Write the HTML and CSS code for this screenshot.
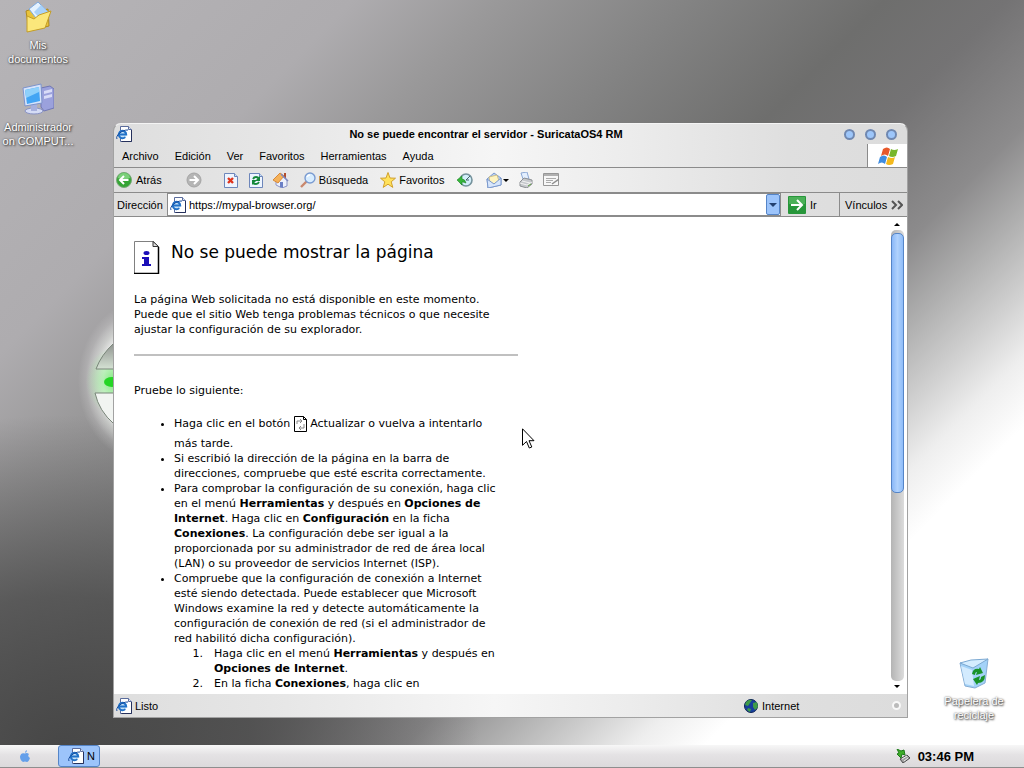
FILE: index.html
```html
<!DOCTYPE html>
<html lang="es">

<head>
  <meta charset="UTF-8" />
  <meta name="viewport" content="width=device-width, initial-scale=1.0" />
  <title>No se puede encontrar el servidor - SuricataOS4 RM</title>
  <link rel="stylesheet" href="styles.css">
</head>

<body>
  <!-- shared icons -->
  <svg class="defs" aria-hidden="true">
    <symbol id="ie-page" viewBox="0 0 16 16">
      <path d="M4.500 .5h8l3 3v12h-11z" fill="#fff" stroke="#5b6c9c" />
      <path d="M15.500 4v11.500h-10" fill="none" stroke="#26315c" />
      <path d="M12.500 .5v3h3" fill="#dbe6f7" stroke="#5b6c9c" />
      <circle cx="6.500" cy="8.500" r="4" fill="#c5e2f8" />
      <path d="M3 8.500h7.200a3.700 3.700 0 1 0-1 2.600" fill="none" stroke="#2272c8" stroke-width="2" />
      <path d="M1 13C-1 10 6 3.500 12 4" fill="none" stroke="#174b9b" stroke-width="1" />
    </symbol>
    <symbol id="page" viewBox="0 0 14 16">
      <path d="M.5 1.500h10l3 3v11H.5z" fill="#eef5ff" stroke="#6d86ba" />
      <path d="M10.500 1.500v3h3" fill="#c8dcf6" stroke="#6d86ba" />
    </symbol>
  </svg>

  <main class="desktop">
    <svg class="orb" viewBox="0 0 80 160" aria-hidden="true">
      <defs>
        <radialGradient id="glow">
          <stop offset="0.600" stop-color="#fff" stop-opacity=".9" />
          <stop offset="0.750" stop-color="#f2f6f1" stop-opacity=".5" />
          <stop offset="0.880" stop-color="#fff" stop-opacity=".15" />
          <stop offset="1" stop-color="#fff" stop-opacity="0" />
        </radialGradient>
        <radialGradient id="greenGlow">
          <stop offset="0" stop-color="#6fe56c" stop-opacity=".9" />
          <stop offset="1" stop-color="#9df09b" stop-opacity="0" />
        </radialGradient>
        <linearGradient id="orbTop" x1="0" y1="0" x2="0" y2="1">
          <stop offset="0" stop-color="#8e928e" />
          <stop offset="1" stop-color="#d5e2d4" />
        </linearGradient>
      </defs>
      <ellipse cx="68" cy="80" rx="64" ry="80" fill="url(#glow)" />
      <ellipse cx="40" cy="80" rx="28" ry="34" fill="url(#greenGlow)" />
      <path d="M22 68Q27 54 40 42H80V68Z" fill="url(#orbTop)" stroke="#798579" />
      <path d="M21 92Q25 110 40 123H80V92Z" fill="#f1f4f1" stroke="#798579" />
      <ellipse cx="38" cy="81" rx="8" ry="5" fill="#25d525" />
    </svg>

    <a class="shortcut documents" href="#">
      <svg viewBox="0 0 32 32" aria-hidden="true">
        <path d="M4 10l6-2 3 3 13-3 1 17-20 5z" fill="#e9c33a" stroke="#b08a1c" />
        <path d="M7 8l9-7 10 10-9 10z" fill="#e4f2ff" stroke="#7fabe0" />
        <path d="M12 11l7-7 7 7-7 8z" fill="#a9d2f9" />
        <path d="M5 31V15l7 3 5-4 12-4-6 17z" fill="#fbe77b" stroke="#c49e28" />
      </svg>
      <span>Mis documentos</span>
    </a>
    <a class="shortcut computer" href="#">
      <svg viewBox="0 0 32 32" aria-hidden="true">
        <path d="M19 5l9-2 4 3v19l-10 3-3-4z" fill="#9ba1dc" stroke="#7077b5" />
        <path d="M22 8l8-2v3l-8 2zM22 13l8-2v3l-8 2z" fill="#d9dcf7" />
        <ellipse cx="12" cy="28" rx="9" ry="3" fill="#d5dcf5" stroke="#8993c6" />
        <path d="M9 21h6v7H9z" fill="#a7b0dd" />
        <path d="M1 5l18-4 1 19-17 3z" fill="#d7e4fb" stroke="#7d93cb" />
        <path d="M3 7l14-3 1 14-13 3z" fill="#43a5f4" />
        <path d="M3 7l14-3v5L4 15z" fill="#8ed0fb" />
      </svg>
      <span>Administrador on COMPUT...</span>
    </a>
    <a class="shortcut trash" href="#">
      <svg viewBox="0 0 32 32" aria-hidden="true">
        <path d="M2 6l12 3 16-7-3 24-10 5-10-2z" fill="#a3d2f8" stroke="#86add4" />
        <path d="M2 6l11-3 17-1-15 9z" fill="#d5edff" stroke="#7ca9d2" />
        <path d="M3 9l11 4 2 16-9-2z" fill="#d3ebfe" />
        <path d="M14 17q1-6 7-5l1-2 3 6-7 2 1-3q-2 0-2 3zM27 18q0 8-7 8l-1 2-4-6 7-3-1 4q2 0 2-3z" fill="#199328" />
      </svg>
      <span>Papelera de reciclaje</span>
    </a>

    <section class="window">
      <header class="title-bar">
        <svg class="icon" aria-hidden="true"><use href="#ie-page" /></svg>
        <h1>No se puede encontrar el servidor - SuricataOS4 RM</h1>
        <div class="window-buttons">
          <button type="button" aria-label="Minimizar"></button>
          <button type="button" aria-label="Maximizar"></button>
          <button type="button" aria-label="Cerrar"></button>
        </div>
      </header>

      <nav class="menu-bar">
        <button type="button">Archivo</button>
        <button type="button">Edición</button>
        <button type="button">Ver</button>
        <button type="button">Favoritos</button>
        <button type="button">Herramientas</button>
        <button type="button">Ayuda</button>
        <div class="flag">
          <svg viewBox="0 0 20 18" aria-hidden="true">
            <path d="M5 2q4-3 7 0l-2 7q-3-3-7 0z" fill="#e8592b" />
            <path d="M13 2q3 2 7 0l-2 7q-4 2-7 0z" fill="#78b72a" />
            <path d="M2 10q4-3 7 0l-2 7q-3-3-7 0z" fill="#3f8ce0" />
            <path d="M10 10q4 2 7 0l-2 7q-4 2-7 0z" fill="#f4b91d" />
          </svg>
        </div>
      </nav>

      <div class="tool-bar">
        <button type="button" class="back">
          <svg class="icon" viewBox="0 0 16 16" aria-hidden="true">
            <circle cx="8" cy="8" r="7.500" fill="#35a535" stroke="#77a877" />
            <path d="M2 6a6 5 0 0 1 12 0q-6 3-12 0" fill="#7bd07a" />
            <path d="M12.500 8H4.500M8 4L4 8l4 4" fill="none" stroke="#fff" stroke-width="2" />
          </svg>
          Atrás
        </button>
        <button type="button" class="forward" aria-label="Adelante">
          <svg class="icon" viewBox="0 0 16 16" aria-hidden="true">
            <circle cx="8" cy="8" r="7" fill="#b5b5b5" stroke="#a4a4a4" />
            <path d="M3.500 8h8M8 4l4 4-4 4" fill="none" stroke="#fff" stroke-width="2" />
          </svg>
        </button>
        <button type="button" aria-label="Detener">
          <svg class="icon" viewBox="-1 0 16 16" aria-hidden="true">
            <use href="#page" width="14" height="16" />
            <path d="M4 6l5 5M9 6l-5 5" stroke="#e0341c" stroke-width="2.400" />
          </svg>
        </button>
        <button type="button" aria-label="Actualizar">
          <svg class="icon" viewBox="-1 0 16 16" aria-hidden="true">
            <use href="#page" width="14" height="16" />
            <path d="M4 7q1-2 3-2t3 2M10 10q-1 2-3 2t-3-1" fill="none" stroke="#15883a" stroke-width="1.800" />
            <path d="M11 4v5H6zM3 13V8h5z" fill="#15883a" />
          </svg>
        </button>
        <button type="button" aria-label="Página principal">
          <svg class="icon" viewBox="0 0 16 16" aria-hidden="true">
            <path d="M3 8l5-5 6 5v6l-5 2-6-3z" fill="#edf1fc" stroke="#8a93c5" />
            <path d="M11 1h2v5h-2z" fill="#b34d2c" />
            <path d="M0 8l7-7 4 3-6 7z" fill="#f5b25a" stroke="#d8893a" />
            <path d="M8 2l7 7" stroke="#7c86bd" stroke-width="1.500" />
            <path d="M7 10h3v6l-3-1z" fill="#6b80c5" />
          </svg>
        </button>
        <button type="button" class="search">
          <svg class="icon" viewBox="0 0 16 16" aria-hidden="true">
            <path d="M1 15l6-6" stroke="#c9876d" stroke-width="2.400" />
            <circle cx="10" cy="6" r="5" fill="#d8edff" stroke="#7a9bd1" stroke-width="1.400" />
            <path d="M7 5q1-2 3-2" fill="none" stroke="#fff" stroke-width="1.500" />
          </svg>
          Búsqueda
        </button>
        <button type="button" class="favorites">
          <svg class="icon" viewBox="0 0 16 16" aria-hidden="true">
            <path d="M8 .5l2 5.500 5.500.2-4.300 3.600 1.600 5.600L8 12.200l-4.800 3.200 1.600-5.600L.5 6.200 6 6z" fill="#ffe25c" stroke="#d1a02c" />
          </svg>
          Favoritos
        </button>
        <button type="button" class="history" aria-label="Historial">
          <svg class="icon" viewBox="0 0 16 16" aria-hidden="true">
            <circle cx="9" cy="8" r="6" fill="#d4effa" stroke="#75929c" stroke-width="1.600" />
            <path d="M9 8l4-4M9 8h3" stroke="#45616a" />
            <path d="M0 8l5-4v3q3 0 4 4-2-1-4-1v3z" fill="#36b63a" stroke="#1d8426" stroke-width=".6" />
          </svg>
        </button>
        <button type="button" class="mail" aria-label="Correo">
          <svg class="icon" viewBox="0 0 16 16" aria-hidden="true">
            <path d="M1 7l7-6 7 5v7L2 16z" fill="#b9d0f4" stroke="#7c99cc" />
            <path d="M3 5l8-2 2 6-5 3-4-2z" fill="#fff4c0" stroke="#ccb978" stroke-width=".8" />
            <path d="M1 7l7 5 7-6v7L2 16z" fill="#d7e6fc" stroke="#7c99cc" />
          </svg>
          <span class="caret"></span>
        </button>
        <button type="button" class="print" aria-label="Imprimir">
          <svg class="icon" viewBox="0 0 16 16" aria-hidden="true">
            <path d="M3 1l6-1 2 7H5z" fill="#e3efff" stroke="#8ca8d4" />
            <path d="M2 10l4-4 8 2v4l-5 4-7-2z" fill="#c5c8cc" stroke="#8b8e92" />
            <path d="M2 11l7 2 5-3M4 9l8 2" fill="none" stroke="#f3f3f3" />
            <path d="M10 14l3-2" stroke="#63a63f" />
          </svg>
        </button>
        <button type="button" aria-label="Modificar">
          <svg class="icon" viewBox="0 0 16 16" aria-hidden="true">
            <path d="M.5 1.500h15v12H.5z" fill="#f7f7f7" stroke="#979797" />
            <path d="M1 3h14" stroke="#b0b0b0" stroke-width="2" />
            <path d="M3 6.500h10M3 8.500h7M3 10.500h5" stroke="#ababab" />
            <path d="M9 12l7-5" stroke="#8d8d8d" stroke-width="1.500" />
          </svg>
        </button>
      </div>

      <form class="address-bar">
        <label for="address">Dirección</label>
        <div class="address-field">
          <svg class="icon" aria-hidden="true"><use href="#ie-page" /></svg>
          <input type="text" id="address" value="https://mypal-browser.org/" />
          <button type="button" class="drop" aria-label="Mostrar direcciones"><span class="caret"></span></button>
        </div>
        <button type="submit" class="go">
          <svg viewBox="0 0 18 18" aria-hidden="true">
            <rect width="18" height="18" rx="1" fill="#27963a" />
            <path d="M1 1h16v7H1z" fill="#4bb058" />
            <path d="M3 9h11M9 4l5 5-5 5" fill="none" stroke="#fff" stroke-width="2" />
          </svg>
          Ir
        </button>
        <button type="button" class="links">
          Vínculos
          <svg viewBox="0 0 12 10" aria-hidden="true">
            <path d="M1 1l4 4-4 4M7 1l4 4-4 4" fill="none" stroke="#555" stroke-width="2" />
          </svg>
        </button>
      </form>

      <div class="view">
        <article class="page">
          <div class="page-title">
            <svg viewBox="0 0 26 33" aria-hidden="true">
              <path d="M.5.5h19l5 5v27H.5z" fill="#fff" stroke="#808080" />
              <path d="M24.500 6v26.500H0" fill="none" stroke="#000" stroke-width="1.500" />
              <path d="M19 .5v5h5.500z" fill="#ddd" stroke="#333" />
              <ellipse cx="12.500" cy="12" rx="3" ry="2" fill="#1c0fb8" />
              <path d="M8 16h7v7h2v2H8v-2h2v-5H8z" fill="#1c0fb8" />
            </svg>
            <h2>No se puede mostrar la página</h2>
          </div>
          <p>
            La página Web solicitada no está disponible en este momento.<br>
            Puede que el sitio Web tenga problemas técnicos o que necesite<br>
            ajustar la configuración de su explorador.
          </p>
          <hr>
          <p>Pruebe lo siguiente:</p>
          <ul>
            <li>Haga clic en el botón
              <svg class="refresh" viewBox="0 0 13 16" aria-hidden="true">
                <path d="M.5.5h9l3 3v12H.5z" fill="#fff" stroke="#000" />
                <path d="M9.500.5v3h3" fill="none" stroke="#000" />
                <path d="M3 8V5h5M6 3l2 2-2 2M10 8v4H5M7 10l-2 2 2 2" fill="none" stroke="#888" />
              </svg>
              Actualizar o vuelva a intentarlo<br>
              más tarde.</li>
            <li>Si escribió la dirección de la página en la barra de<br>
              direcciones, compruebe que esté escrita correctamente.</li>
            <li>Para comprobar la configuración de su conexión, haga clic<br>
              en el menú <b>Herramientas</b> y después en <b>Opciones de<br>
              Internet</b>. Haga clic en <b>Configuración</b> en la ficha<br>
              <b>Conexiones</b>. La configuración debe ser igual a la<br>
              proporcionada por su administrador de red de área local<br>
              (LAN) o su proveedor de servicios Internet (ISP).</li>
            <li>Compruebe que la configuración de conexión a Internet<br>
              esté siendo detectada. Puede establecer que Microsoft<br>
              Windows examine la red y detecte automáticamente la<br>
              configuración de conexión de red (si el administrador de<br>
              red habilitó dicha configuración).
              <ol>
                <li>Haga clic en el menú <b>Herramientas</b> y después en<br>
                  <b>Opciones de Internet</b>.</li>
                <li>En la ficha <b>Conexiones</b>, haga clic en</li>
              </ol>
            </li>
          </ul>
        </article>
        <div class="scrollbar">
          <span class="arrow up"></span>
          <div class="track"><div class="thumb"></div></div>
          <span class="arrow down"></span>
        </div>
      </div>

      <footer class="status-bar">
        <svg class="icon" aria-hidden="true"><use href="#ie-page" /></svg>
        <span class="status">Listo</span>
        <span class="zone">
          <svg class="globe" viewBox="0 0 14 14" aria-hidden="true">
            <circle cx="7" cy="7" r="6.500" fill="#173f9e" stroke="#0c2253" />
            <path d="M2 3q3-3 6-2L6 4 4 7 1 6zM9 4l4-1 1 5-3 3-2-3zM4 9l3 1-1 3-3-2z" fill="#3f9c48" />
          </svg>
          Internet
        </span>
        <span class="grip"></span>
      </footer>
    </section>

    <svg class="cursor" viewBox="0 0 13 21" aria-hidden="true">
      <path d="M.5.8v16.500l4-3.800 2.800 6.500 2.500-1-2.800-6.300h5z" fill="#fff" stroke="#000" />
    </svg>
  </main>

  <footer class="taskbar">
    <button type="button" class="start" aria-label="Inicio">
      <svg viewBox="0 0 10 12" aria-hidden="true">
        <path d="M5 3.500q2-1 4 .5-2 2 1 4-1.500 4-3 4-2-.8-4 0Q0 10 0 6.500 1 2 5 3.500zM5 3q0-2.500 2-3 0 2.500-2 3z" fill="#639fea" />
      </svg>
    </button>
    <button type="button" class="task" title="No se puede encontrar el servidor">
      <svg class="icon" aria-hidden="true"><use href="#ie-page" /></svg>
      <span>N</span>
    </button>
    <div class="tray">
      <svg viewBox="0 0 14 14" aria-hidden="true">
        <path d="M4 10l7-4 3 3-7 5z" fill="#a3a3a3" stroke="#4c4c4c" />
        <path d="M6 10l5-3M8 12l4-3" stroke="#eee" />
        <path d="M1 0l4 2 3-1 1 5-3-1-1 4-4-4 2-1z" fill="#3fae2a" stroke="#1c7a18" />
      </svg>
      <time>03:46 PM</time>
    </div>
  </footer>
</body>

</html>
```

FILE: styles.css
```css
:root {
  --ui-font: "Liberation Sans", Arial, sans-serif;
  --page-font: Verdana, "DejaVu Sans", sans-serif;
  --line: #8b8b8b;
  --blue: #9cc4fb;
  --blue-border: #5585c8;
  --chrome: linear-gradient(90deg, #dedede 0%, #e6e6e6 20%, #f6f6f6 48%, #ececec 65%, #dfdfdf 85%, #dcdcdc 100%);
}

* {
  box-sizing: border-box;
}

body {
  margin: 0;
  height: 100vh;
  display: flex;
  flex-direction: column;
  overflow: hidden;
  font-family: var(--ui-font);
  font-size: 11px;
  color: #000;
}

button {
  display: flex;
  align-items: center;
  gap: 4px;
  padding: 0;
  border: none;
  background: none;
  font: inherit;
  color: inherit;
}

svg {
  display: block;
  flex: none;
}

.defs {
  position: absolute;
  width: 0;
  height: 0;
}

.icon {
  width: 16px;
  height: 16px;
}

.caret {
  border: 3px solid transparent;
  border-top-color: #000;
  border-bottom: none;
}

/* desktop */
.desktop {
  position: relative;
  flex: 1;
  background:
    radial-gradient(ellipse 420px 330px at 60px 100%, rgba(66, 66, 66, 0.9) 0%, rgba(68, 68, 68, 0.7) 45%, rgba(76, 76, 76, 0) 100%),
    linear-gradient(135deg, #b6b4b7 0%, #aeacaf 20%, #9a999a 28%, #838383 39%, #6e6e6d 50%, #747374 57%, #8c8b8c 65%, #b0b0b0 70%, #cecece 74%, #eeeeee 78%, #fff 82%);
}

.orb {
  position: absolute;
  left: 74px;
  top: 301px;
  width: 80px;
  height: 160px;
}

.shortcut {
  position: absolute;
  width: 76px;
  display: flex;
  flex-direction: column;
  align-items: center;
  gap: 5px;
  color: #fff;
  line-height: 14px;
  text-align: center;
  text-decoration: none;
  text-shadow: 1px 1px 2px #333, 0 0 2px #555;
}

.shortcut svg {
  width: 32px;
  height: 32px;
}

.documents {
  left: 0;
  top: 1px;
}

.computer {
  left: 0;
  top: 83px;
}

.trash {
  right: 12px;
  bottom: 23px;
}

/* browser window */
.window {
  position: absolute;
  inset: 123px 116px 27px 113px;
  display: flex;
  flex-direction: column;
  background: var(--chrome);
  border: 1px solid #a2a2a2;
  border-top-color: #f4f4f4;
  border-radius: 8px 8px 0 0;
  overflow: hidden;
}

.title-bar {
  display: flex;
  align-items: center;
  height: 20px;
  padding: 0 10px 0 2px;
}

.title-bar h1 {
  flex: 1;
  margin: 0;
  padding-right: 4px;
  font-size: 11px;
  text-align: center;
}

.window-buttons {
  display: flex;
  gap: 10px;
}

.window-buttons button {
  width: 11px;
  height: 11px;
  border: 2px solid #7088b0;
  border-radius: 50%;
  background: #9dc6fa;
}

.menu-bar {
  display: flex;
  align-items: center;
  gap: 16px;
  height: 24px;
  padding-left: 8px;
  border-bottom: 1px solid var(--line);
}

.flag {
  display: flex;
  align-items: center;
  justify-content: center;
  align-self: stretch;
  width: 40px;
  margin-left: auto;
  border-left: 1px solid var(--line);
  background: #fff;
}

.flag svg {
  width: 20px;
  height: 18px;
}

.tool-bar {
  display: flex;
  align-items: center;
  gap: 9px;
  height: 25px;
  padding-left: 2px;
  border-bottom: 1px solid var(--line);
}

.forward {
  margin: 0 12px 0 15px;
}

.search,
.favorites {
  gap: 3px;
}

.search {
  margin-left: 2px;
}

.favorites {
  margin-left: 3px;
}

.history {
  margin-left: 4px;
}

.mail {
  gap: 1px;
  margin-left: 4px;
}

.address-bar {
  display: flex;
  align-items: center;
  height: 24px;
  margin: 0;
  padding-left: 3px;
  border-bottom: 1px solid var(--line);
}

.address-bar label {
  width: 50px;
}

.address-field {
  flex: 1;
  display: flex;
  align-items: center;
  gap: 3px;
  height: 23px;
  padding-left: 2px;
  border: 1px solid var(--line);
  background: #fff;
}

.address-field input {
  flex: 1;
  min-width: 0;
  padding: 0;
  border: none;
  outline: none;
  background: none;
  font: inherit;
}

.drop {
  justify-content: center;
  align-self: stretch;
  width: 14px;
  border: 1px solid var(--blue-border);
  border-radius: 2px;
  background: var(--blue);
}

.drop .caret {
  border-width: 4px;
  border-bottom: none;
  border-top-color: #23406f;
}

.go {
  width: 51px;
  margin-left: 7px;
}

.go svg {
  width: 18px;
  height: 18px;
}

.links {
  align-self: stretch;
  width: 68px;
  padding-left: 5px;
  border-left: 1px solid var(--line);
}

.links svg {
  width: 12px;
  height: 10px;
}

/* page view */
.view {
  flex: 1;
  display: flex;
  min-height: 0;
  background: #fff;
}

.page {
  flex: 1;
  padding: 24px 20px 0;
  overflow: hidden;
  font-family: var(--page-font);
  line-height: 15px;
}

.page-title {
  display: flex;
  gap: 11px;
  height: 33px;
}

.page-title svg {
  width: 26px;
  height: 33px;
}

.page-title h2 {
  margin: 0;
  font-size: 17px;
  font-weight: normal;
  line-height: 22px;
}

.page p,
.page ul,
.page hr {
  max-width: 384px;
}

.page p {
  margin: 18px 0;
}

.page hr {
  height: 2px;
  margin: 17px 0 27px;
  border: none;
  background: #c0c0c0;
}

.page p + hr {
  margin-top: -1px;
}

.page ul {
  margin: 18px 0 0;
  padding-left: 40px;
}

.page ol {
  margin: 0;
  padding-left: 40px;
}

.page ol > li::marker {
  content: counter(list-item) ".\2003";
}

.refresh {
  display: inline-block;
  width: 13px;
  height: 16px;
  margin-bottom: 4px;
  vertical-align: -9px;
}

.scrollbar {
  display: flex;
  flex-direction: column;
  align-items: center;
  gap: 4px;
  width: 20px;
  padding: 6px 0;
}

.arrow {
  border: 3px solid transparent;
}

.up {
  border-top: none;
  border-bottom-color: #000;
}

.down {
  border-bottom: none;
  border-top-color: #000;
}

.track {
  flex: 1;
  width: 13px;
  padding-top: 3px;
  border-radius: 5px;
  background: linear-gradient(90deg, #b4b4b4, #dcdcdc);
}

.thumb {
  height: 58%;
  border: 1px solid var(--blue-border);
  border-radius: 5px;
  background: linear-gradient(90deg, #8ab8f8, #b0d2fd 50%, #8ebcf9);
}

.status-bar {
  display: flex;
  align-items: center;
  gap: 3px;
  height: 23px;
  padding: 0 6px 0 2px;
}

.status {
  flex: 1;
}

.zone {
  display: flex;
  align-items: center;
  gap: 4px;
  width: 145px;
}

.globe {
  width: 14px;
  height: 14px;
}

.grip {
  width: 9px;
  height: 9px;
  border: 2px solid #f8f8f8;
  border-radius: 50%;
  background: #bbb;
}

.cursor {
  position: absolute;
  left: 522px;
  top: 428px;
  width: 13px;
  height: 21px;
}

/* taskbar */
.taskbar {
  display: flex;
  align-items: center;
  height: 23px;
  border-bottom: 1px solid #8e8e8e;
  background: linear-gradient(#f7f7f7, #e4e2e4 45%, #dcdadc);
}

.start {
  justify-content: center;
  width: 50px;
}

.start svg {
  width: 10px;
  height: 12px;
}

.task {
  width: 42px;
  height: 22px;
  margin-left: 8px;
  padding-left: 9px;
  gap: 3px;
  border: 1px solid var(--blue-border);
  border-radius: 3px;
  background: var(--blue);
}

.tray {
  display: flex;
  align-items: center;
  gap: 8px;
  margin-left: auto;
  padding-right: 50px;
}

.tray svg {
  width: 14px;
  height: 14px;
}

.tray time {
  font-size: 13px;
  font-weight: bold;
}
```
